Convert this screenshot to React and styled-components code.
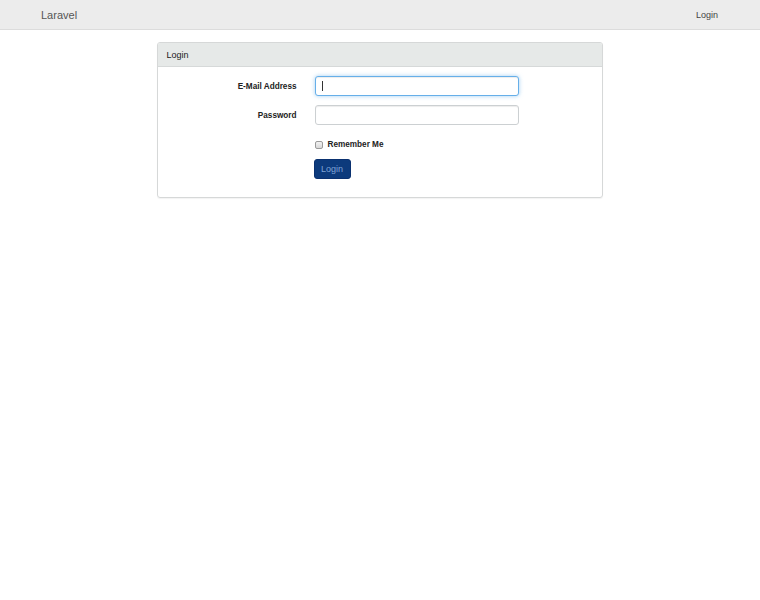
import React from 'react';
import styled, { createGlobalStyle, css } from 'styled-components';

const GlobalStyle = createGlobalStyle`
  html, body {
    margin: 0;
    padding: 0;
    background: #fff;
  }
  body {
    font-family: "Liberation Sans", Arial, sans-serif;
    font-size: 9px;
    color: #222;
  }
`;

const Page = styled.div`
  min-height: 600px;
  background: #fff;
`;

const Navbar = styled.nav`
  height: 29px;
  background: #ececec;
  border-bottom: 1px solid #dcdcdc;
  display: flex;
  align-items: center;
  justify-content: space-between;
  padding: 0 42px 0 41px;
`;

const Brand = styled.a`
  font-size: 11px;
  color: #555;
  text-decoration: none;
`;

const NavLink = styled.a`
  font-size: 9px;
  color: #444;
  text-decoration: none;
`;

const Main = styled.main`
  display: flex;
  justify-content: center;
  padding: 12px 1px 0 0;
`;

const Panel = styled.section`
  width: 444px;
  border: 1px solid #d6d8d8;
  border-radius: 3px;
  box-shadow: 0 1px 1px rgba(0, 0, 0, 0.05);
  overflow: hidden;
`;

const PanelHeading = styled.header`
  height: 23px;
  background: #e6e9e8;
  border-bottom: 1px solid #d6d9d9;
  display: flex;
  align-items: center;
  padding: 0 9px;
  font-size: 9px;
  color: #1a1a1a;
`;

const PanelBody = styled.form`
  display: grid;
  grid-template-columns: 139px 204px;
  column-gap: 18px;
  row-gap: 9px;
  padding: 9px 0 18px;
  align-items: center;
`;

const Label = styled.label`
  text-align: right;
  font-weight: bold;
  font-size: 8.2px;
  color: #222;
`;

const Field = styled.div`
  position: relative;
  ${({ $caret }) =>
    $caret &&
    css`
      &::after {
        content: '';
        position: absolute;
        left: 7px;
        top: 5px;
        width: 1px;
        height: 10px;
        background: #333;
      }
    `}
`;

const Input = styled.input`
  box-sizing: border-box;
  width: 204px;
  height: 20px;
  display: block;
  border: 1px solid #ccd0d2;
  border-radius: 3px;
  background: #fff;
  box-shadow: inset 0 1px 1px rgba(0, 0, 0, 0.075);
  outline: none;
  font-family: inherit;
  font-size: 9px;
  padding: 0 7px;
  ${({ $focus }) =>
    $focus &&
    css`
      border-color: #66afe9;
      box-shadow: inset 0 1px 1px rgba(0, 0, 0, 0.075),
        0 0 4px rgba(102, 175, 233, 0.6);
    `}
`;

const Spacer = styled.div``;

const CheckRow = styled.label`
  display: flex;
  align-items: center;
  gap: 5px;
  font-weight: bold;
  font-size: 8.2px;
  color: #222;
  margin-top: 6px;
`;

const Box = styled.span`
  box-sizing: border-box;
  width: 8px;
  height: 8px;
  border: 1px solid #9a9a9a;
  border-radius: 2px;
  background: linear-gradient(#f2f2f2, #d8d8d8);
`;

const Button = styled.button`
  width: 37px;
  height: 20px;
  margin-left: -1px;
  margin-top: 1px;
  border: 1px solid #0a3170;
  border-radius: 3px;
  background: #0c3a7c;
  color: #7fa3d6;
  font-family: inherit;
  font-size: 9px;
  padding: 0;
`;

export default function App() {
  return (
    <Page>
      <GlobalStyle />
      <Navbar>
        <Brand href="#">Laravel</Brand>
        <NavLink href="#">Login</NavLink>
      </Navbar>
      <Main>
        <Panel>
          <PanelHeading>Login</PanelHeading>
          <PanelBody onSubmit={(e) => e.preventDefault()}>
            <Label htmlFor="email">E-Mail Address</Label>
            <Field $caret>
              <Input id="email" type="email" $focus />
            </Field>
            <Label htmlFor="password">Password</Label>
            <Field>
              <Input id="password" type="password" />
            </Field>
            <Spacer />
            <CheckRow>
              <Box />
              Remember Me
            </CheckRow>
            <Spacer />
            <div>
              <Button type="submit">Login</Button>
            </div>
          </PanelBody>
        </Panel>
      </Main>
    </Page>
  );
}
